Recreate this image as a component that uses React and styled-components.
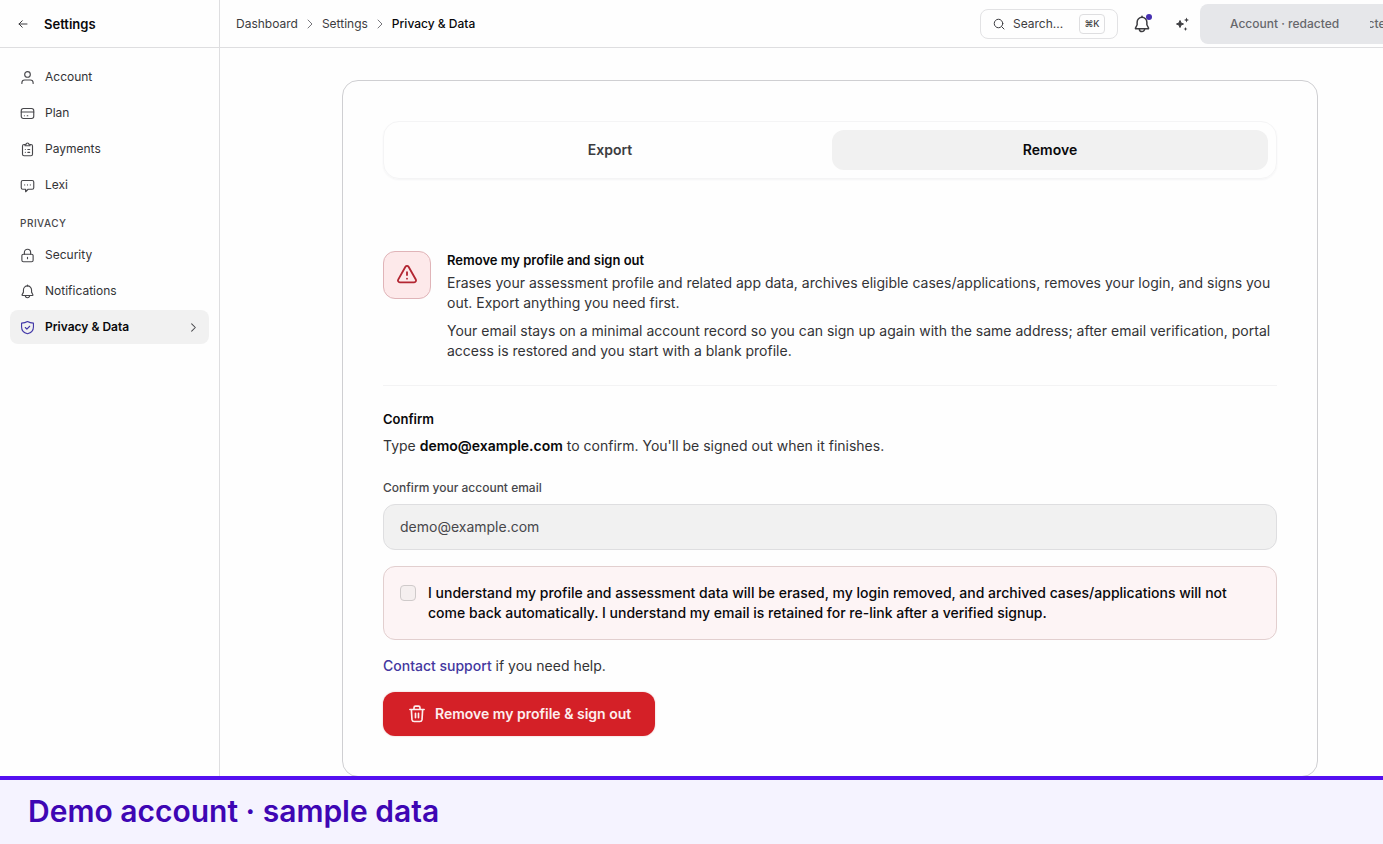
import React from "react";
import styled, { createGlobalStyle } from "styled-components";

const Global = createGlobalStyle`
  *, *::before, *::after { box-sizing: border-box; }
  html, body { margin: 0; padding: 0; }
  body {
    background: #fefefe;
    color: #333336;
    font-family: Inter, "Liberation Sans", sans-serif;
    font-size: 14px;
    line-height: 20px;
    overflow-x: hidden;
  }
  h1, h2, p, ul, ol { margin: 0; padding: 0; }
  ul, ol { list-style: none; }
  button, input { font: inherit; color: inherit; }
  a { color: inherit; text-decoration: none; }
`;

const Page = styled.div`
  display: grid;
  grid-template-columns: 220px minmax(0, 1fr);
  min-height: 100vh;
`;

const Sidebar = styled.aside`
  border-right: 1px solid #dedee0;
`;

const SidebarHead = styled.div`
  display: flex;
  align-items: center;
  gap: 14px;
  height: 48px;
  padding: 0 16px;
  border-bottom: 1px solid #dedee0;
`;

const IconButton = styled.button`
  display: grid;
  place-items: center;
  position: relative;
  width: ${(p) => p.$size}px;
  height: ${(p) => p.$size}px;
  padding: 0;
  border: 0;
  background: none;
  color: #3c3c40;
`;

const SidebarTitle = styled.h1`
  color: #09090b;
  font-size: 13px;
  font-weight: 600;
  line-height: 18px;
`;

const Nav = styled.nav`
  display: flex;
  flex-direction: column;
  gap: 2px;
  padding: 12px 10px;
`;

const NavLink = styled.a`
  display: flex;
  align-items: center;
  gap: 10px;
  height: 34px;
  padding: 0 10px;
  border-radius: 8px;
  background: ${(p) => (p.$active ? "#f1f1f1" : "transparent")};
  color: ${(p) => (p.$active ? "#09090b" : "#333336")};
  font-size: 12px;
  font-weight: ${(p) => (p.$active ? 600 : 400)};
  line-height: 16px;

  > svg { color: #47474b; }
  > svg:first-child { color: ${(p) => (p.$active ? "#4338a8" : "#47474b")}; }
`;

const NavLabel = styled.span`
  flex: 1;
`;

const NavHeading = styled.h2`
  height: 32px;
  padding: 12px 10px 0;
  color: #47474b;
  font-size: 10px;
  font-weight: 500;
  line-height: 14px;
  letter-spacing: 0.5px;
  text-transform: uppercase;
`;

const Content = styled.div`
  min-width: 0;
`;

const TopBar = styled.header`
  display: flex;
  align-items: center;
  justify-content: space-between;
  height: 48px;
  padding-left: 16px;
  border-bottom: 1px solid #dedee0;
`;

const Crumbs = styled.ol`
  display: flex;
  align-items: center;
  gap: 6px;
  font-size: 12px;
  line-height: 16px;
`;

const Crumb = styled.li`
  display: flex;
  align-items: center;
  gap: 6px;
  color: ${(p) => (p.$current ? "#09090b" : "#3c3c40")};
  font-weight: ${(p) => (p.$current ? 500 : 400)};

  svg { color: #77777c; }
`;

const Actions = styled.div`
  display: flex;
  align-items: center;
`;

const IconGroup = styled.div`
  display: flex;
  gap: 16px;
  margin: 0 6px 0 12px;
`;

const SearchButton = styled.button`
  display: flex;
  align-items: center;
  gap: 8px;
  width: 138px;
  height: 30px;
  padding: 0 12px;
  border: 1px solid #e2e2e4;
  border-radius: 8px;
  background: #fefefe;
  color: #3c3c40;
  font-size: 12px;
  line-height: 16px;
  text-align: left;
`;

const SearchText = styled.span`
  flex: 1;
`;

const Key = styled.kbd`
  display: grid;
  place-items: center;
  width: 26px;
  height: 20px;
  border: 1px solid #dedee0;
  border-radius: 4px;
  font-family: Inter, "DejaVu Sans", sans-serif;
  font-size: 9px;
  font-weight: 500;
  line-height: 12px;
`;

const Dot = styled.span`
  position: absolute;
  top: 2px;
  right: 2px;
  width: 6px;
  height: 6px;
  border-radius: 50%;
  background: #4630b0;
`;

const AccountPill = styled.div`
  display: flex;
  align-items: center;
  justify-content: space-between;
  width: 183px;
  height: 40px;
  padding-left: 30px;
  border-radius: 8px 0 0 8px;
  background: #e6e7ea;
  color: #66676c;
  font-size: 12px;
  font-weight: 500;
  line-height: 16px;
  white-space: nowrap;
`;

const Clipped = styled.span`
  display: flex;
  justify-content: center;
  width: 13px;
  overflow: hidden;
`;

const Main = styled.main`
  padding: 32px 65px 67px 122px;
`;

const Card = styled.section`
  display: flex;
  flex-direction: column;
  padding: 40px;
  border: 1px solid #cfcfd2;
  border-radius: 16px;
`;

const Tabs = styled.div`
  display: grid;
  grid-template-columns: 1fr 1fr;
  gap: 4px;
  padding: 8px;
  margin-bottom: 72px;
  border: 1px solid #f4f4f5;
  border-radius: 16px;
  box-shadow: 0 1px 2px #f4f4f5;
`;

const Tab = styled.button`
  height: 40px;
  padding: 0;
  border: 0;
  border-radius: 12px;
  background: ${(p) => (p.$active ? "#f1f1f1" : "transparent")};
  color: ${(p) => (p.$active ? "#09090b" : "#3c3c40")};
  font-weight: 600;
`;

const Intro = styled.div`
  display: flex;
  align-items: flex-start;
  gap: 16px;
  padding-bottom: 24px;
  margin-bottom: 24px;
  border-bottom: 1px solid #f3f3f4;
`;

const WarningTile = styled.div`
  display: grid;
  place-items: center;
  flex: none;
  width: 48px;
  height: 48px;
  border: 1px solid #e0b4b8;
  border-radius: 12px;
  background: #fde9ea;
  color: #b32632;
`;

const IntroText = styled.div`
  display: flex;
  flex-direction: column;
  gap: 8px;
`;

const Heading = styled.h2`
  margin-bottom: ${(p) => p.$gap}px;
  color: #09090b;
  font-size: 13px;
  font-weight: 600;
  line-height: 18px;
`;

const Strong = styled.strong`
  color: #09090b;
  font-weight: 600;
`;

const FieldLabel = styled.label`
  margin: 24px 0 8px;
  color: #47474b;
  font-size: 12px;
  font-weight: 500;
  line-height: 16px;
`;

const EmailInput = styled.input`
  width: 100%;
  height: 46px;
  padding: 0 16px 2px;
  border: 1px solid #dedee0;
  border-radius: 12px;
  background: #f1f1f1;
  color: #47474b;
  outline: 0;
`;

const Consent = styled.label`
  display: flex;
  align-items: flex-start;
  gap: 12px;
  margin: 16px 0;
  padding: 16px;
  border: 1px solid #e2cfcf;
  border-radius: 12px;
  background: #fdf4f5;
  color: #09090b;
  font-weight: 500;
`;

const Checkbox = styled.input`
  appearance: none;
  flex: none;
  width: 16px;
  height: 16px;
  margin: 2px 0 0;
  border: 1px solid #cfcaca;
  border-radius: 4px;
  background: #f5efef;
`;

const SupportLink = styled.a`
  color: #43379f;
  font-weight: 500;
`;

const DangerButton = styled.button`
  display: flex;
  align-items: center;
  align-self: flex-start;
  gap: 9px;
  height: 44px;
  margin-top: 16px;
  padding: 0 24px 0 25px;
  border: 0;
  border-radius: 12px;
  background: #d42027;
  color: #fdeeee;
  font-weight: 600;
  box-shadow: 0 0 2px #e9b9bb;
`;

const Banner = styled.footer`
  position: fixed;
  right: 0;
  bottom: 0;
  left: 0;
  height: 68px;
  padding: 0 28px;
  border-top: 4px solid #5410f0;
  background: #f5f3ff;
  color: #3e06b4;
  font-size: 30px;
  font-weight: 600;
  line-height: 62px;
`;

function Icon({ size = 15, width = 2, children }) {
  return (
    <svg
      width={size}
      height={size}
      viewBox="0 0 24 24"
      fill="none"
      stroke="currentColor"
      strokeWidth={width}
      strokeLinecap="round"
      strokeLinejoin="round"
      aria-hidden="true"
    >
      {children}
    </svg>
  );
}

const shapes = {
  user: (
    <>
      <circle cx="12" cy="7" r="4.5" />
      <path d="M3 21.5v-1a4.500 4.500 0 0 1 4.500-4.500h9a4.500 4.500 0 0 1 4.500 4.500v1" />
    </>
  ),
  card: (
    <>
      <rect x="2" y="4" width="20" height="16" rx="3.500" />
      <path d="M2 9.500h20M7 15.500h.01M11.500 15.500h1" />
    </>
  ),
  clipboard: (
    <>
      <path d="M8 4H6.500a2.500 2.500 0 0 0-2.500 2.500v13A2.500 2.500 0 0 0 6.500 22h11a2.500 2.500 0 0 0 2.500-2.500v-13A2.500 2.500 0 0 0 17.500 4H16" />
      <path d="M8 6V4.500a1 1 0 0 1 1-1h1a2 2 0 0 1 4 0h1a1 1 0 0 1 1 1V6zM8.500 12h.01M12.500 12h3M8.500 16.500h.01M12.500 16.500h3" />
    </>
  ),
  message: (
    <>
      <path d="M4.500 4h15A2.500 2.500 0 0 1 22 6.500v9a2.500 2.500 0 0 1-2.500 2.500H13l-4 4v-4H4.500A2.500 2.500 0 0 1 2 15.500v-9A2.500 2.500 0 0 1 4.500 4z" />
      <path d="M7.500 11h.01M12 11h.01M16.500 11h.01" />
    </>
  ),
  lock: (
    <>
      <rect x="3" y="10" width="18" height="12" rx="2.500" />
      <path d="M7 10V7a5 5 0 0 1 10 0v3M12 15v2" />
    </>
  ),
  bell: (
    <>
      <path d="M12 3a6.500 6.500 0 0 0-6.500 6.500V13L3.300 17.400a.7.7 0 0 0 .6 1h16.200a.7.7 0 0 0 .6-1L18.500 13V9.500A6.500 6.500 0 0 0 12 3z" />
      <path d="M8.500 18.500a3.500 3.500 0 0 0 7 0M12 1.500V3" />
    </>
  ),
  shield: (
    <>
      <path d="M12 2.500c3 1.800 6 2.400 9.500 2.500v6c0 6-4.500 9.500-9.500 11-5-1.500-9.500-5-9.500-11V5C6 4.900 9 4.300 12 2.500z" />
      <path d="m8.500 12 2.500 2.500 4.500-4.500" />
    </>
  ),
};

const chevron = <path d="m8 4 8 8-8 8" />;

const accountItems = [
  ["Account", "user"],
  ["Plan", "card"],
  ["Payments", "clipboard"],
  ["Lexi", "message"],
];

const privacyItems = [
  ["Security", "lock"],
  ["Notifications", "bell"],
  ["Privacy & Data", "shield", true],
];

function NavItem({ item }) {
  const [label, icon, active] = item;
  return (
    <NavLink href="#" $active={active} aria-current={active ? "page" : undefined}>
      <Icon width={1.8}>{shapes[icon]}</Icon>
      <NavLabel>{label}</NavLabel>
      {active && <Icon size={11} width={2.2}>{chevron}</Icon>}
    </NavLink>
  );
}

export default function App() {
  return (
    <>
      <Global />
      <Page>
        <Sidebar>
          <SidebarHead>
            <IconButton $size={14} aria-label="Back">
              <Icon size={12} width={2}>
                <path d="M20 12H4M10.500 5.500 4 12l6.500 6.500" />
              </Icon>
            </IconButton>
            <SidebarTitle>Settings</SidebarTitle>
          </SidebarHead>
          <Nav aria-label="Settings">
            {accountItems.map((item) => (
              <NavItem key={item[0]} item={item} />
            ))}
            <NavHeading>Privacy</NavHeading>
            {privacyItems.map((item) => (
              <NavItem key={item[0]} item={item} />
            ))}
          </Nav>
        </Sidebar>

        <Content>
          <TopBar>
            <Crumbs>
              <Crumb>
                <a href="#">Dashboard</a>
                <Icon size={12}>{chevron}</Icon>
              </Crumb>
              <Crumb>
                <a href="#">Settings</a>
                <Icon size={12}>{chevron}</Icon>
              </Crumb>
              <Crumb $current>Privacy &amp; Data</Crumb>
            </Crumbs>
            <Actions>
              <SearchButton>
                <Icon size={12} width={2}>
                  <circle cx="11" cy="11" r="8.500" />
                  <path d="m17.500 17.500 4.500 4.500" />
                </Icon>
                <SearchText>Search...</SearchText>
                <Key>⌘K</Key>
              </SearchButton>
              <IconGroup>
                <IconButton $size={24} aria-label="Notifications">
                  <Icon size={18} width={2}>{shapes.bell}</Icon>
                  <Dot />
                </IconButton>
                <IconButton $size={24} aria-label="Assistant">
                  <svg width="16" height="16" viewBox="0 0 16 16" fill="currentColor" aria-hidden="true">
                    <path d="M6 4.500 7 7l2.500 1L7 9l-1 2.500L5 9 2.500 8 5 7z" stroke="currentColor" strokeLinejoin="round" />
                    <path d="m12.500 1.500.7 1.800 1.800.7-1.800.7-.7 1.800-.7-1.800L10 4l1.800-.7zM11.500 11l.6 1.400 1.400.6-1.400.6-.6 1.400-.6-1.400-1.400-.6 1.400-.6z" />
                  </svg>
                </IconButton>
              </IconGroup>
              <AccountPill>
                <span>Account · redacted</span>
                <Clipped>cte</Clipped>
              </AccountPill>
            </Actions>
          </TopBar>

          <Main>
            <Card>
              <Tabs role="tablist">
                <Tab role="tab" aria-selected="false">Export</Tab>
                <Tab role="tab" aria-selected="true" $active>Remove</Tab>
              </Tabs>

              <Intro>
                <WarningTile>
                  <Icon size={22} width={2}>
                    <path d="M10.300 3 2.400 17a2 2 0 0 0 1.700 3h15.800a2 2 0 0 0 1.700-3L13.700 3a2 2 0 0 0-3.400 0z" />
                    <path d="M12 9v3M12 16h.01" />
                  </Icon>
                </WarningTile>
                <IntroText>
                  <div>
                    <Heading $gap={4}>Remove my profile and sign out</Heading>
                    <p>
                      Erases your assessment profile and related app data, archives eligible
                      cases/applications, removes your login, and signs you out. Export anything
                      you need first.
                    </p>
                  </div>
                  <p>
                    Your email stays on a minimal account record so you can sign up again with the
                    same address; after email verification, portal access is restored and you start
                    with a blank profile.
                  </p>
                </IntroText>
              </Intro>

              <Heading $gap={8}>Confirm</Heading>
              <p>
                Type <Strong>demo@example.com</Strong> to confirm. You'll be signed out when it
                finishes.
              </p>
              <FieldLabel htmlFor="email">Confirm your account email</FieldLabel>
              <EmailInput id="email" type="email" defaultValue="demo@example.com" />
              <Consent>
                <Checkbox type="checkbox" />
                <span>
                  I understand my profile and assessment data will be erased, my login removed, and
                  archived cases/applications will not come back automatically. I understand my
                  email is retained for re-link after a verified signup.
                </span>
              </Consent>
              <p>
                <SupportLink href="#">Contact support</SupportLink> if you need help.
              </p>
              <DangerButton>
                <Icon size={18} width={2.2}>
                  <path d="M2.500 6h19M8 6V3.500a2 2 0 0 1 2-2h4a2 2 0 0 1 2 2V6M4.500 6l.8 13.500a3 3 0 0 0 3 2.500h7.400a3 3 0 0 0 3-2.500L19.500 6M10 11v6M14 11v6" />
                </Icon>
                Remove my profile &amp; sign out
              </DangerButton>
            </Card>
          </Main>
        </Content>
      </Page>
      <Banner>Demo account · sample data</Banner>
    </>
  );
}
